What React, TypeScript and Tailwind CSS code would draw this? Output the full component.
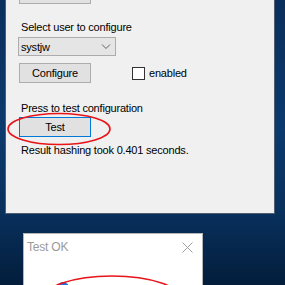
const font = "font-['Liberation_Sans',Arial,sans-serif]";

const App = () => {
  return (
    <div
      className={`relative w-[285px] h-[285px] overflow-hidden bg-[linear-gradient(180deg,#0a2f5c_0%,#0b3a6e_45%,#08305c_75%,#031d3b_100%)] ${font} text-[11px] leading-[16px] tracking-[-0.2px] text-black`}
    >
      {/* main window */}
      <div className="ml-[5px] w-[270px] h-[214px] bg-[#f0f0f0] border-x border-b border-[#4f5d6e] flex flex-col pl-[13px]">
        <div className="w-[72px] h-[4px] bg-[#e1e1e1] border-x border-b border-[#adadad]" />
        <p className="mt-[15px] pl-[2px]">Select user to configure</p>
        <div className="mt-[2px] -ml-[1px] w-[98px] h-[19px] bg-[#e5e5e5] border border-[#acacac] flex items-center justify-between pl-[2px] pr-[4px]">
          <span>systjw</span>
          <svg width="10" height="6" viewBox="0 0 10 6" fill="none">
            <path d="M1 0.5 L5 4.5 L9 0.5" stroke="#606060" strokeWidth="1" />
          </svg>
        </div>
        <div className="mt-[7px] flex items-center">
          <button className="w-[72px] h-[20px] bg-[#e1e1e1] border border-[#adadad] flex items-center justify-center">
            Configure
          </button>
          <div className="ml-[41px] w-[13px] h-[13px] bg-white border border-[#333333]" />
          <span className="ml-[4px]">enabled</span>
        </div>
        <p className="mt-[17px] pl-[2px]">Press to test configuration</p>
        <button className="mt-[1px] w-[72px] h-[20px] bg-[#e1e1e1] border border-[#0078d7] flex items-center justify-center">
          Test
        </button>
        <p className="mt-[5px] pl-[2px]">Result hashing took 0.401 seconds.</p>
      </div>

      {/* Test OK dialog */}
      <div className="mt-[19px] ml-[23px] w-[180px] h-[60px] bg-white border border-[#b5b5b5] flex items-start justify-between pl-[3px] pr-[9px] pt-[5px]">
        <span className="text-[#9a9a9a] text-[12px]">Test OK</span>
        <svg width="11" height="11" viewBox="0 0 11 11" className="mt-[3px]">
          <path d="M0.5 0.5 L10.5 10.5 M10.5 0.5 L0.5 10.5" stroke="#a0a0a0" strokeWidth="1" />
        </svg>
      </div>

      {/* info icon peeking */}
      <div className="absolute left-[57px] top-[282px] w-[12px] h-[12px] rounded-full bg-[#1c6fd1]" />

      {/* red annotation ellipses */}
      <svg className="absolute left-0 top-0" width="285" height="285" viewBox="0 0 285 285" fill="none">
        <ellipse cx="59" cy="129" rx="51" ry="15.5" stroke="#e8141a" strokeWidth="1.6" />
        <ellipse cx="112" cy="300" rx="70" ry="24" stroke="#e8141a" strokeWidth="1.6" />
      </svg>
    </div>
  );
};

export default App;
